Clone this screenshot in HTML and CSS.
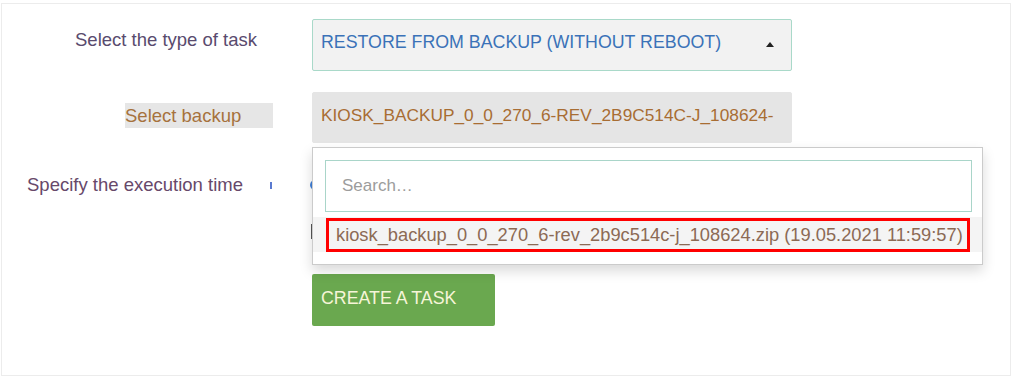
FILE: index.html
```html
<!DOCTYPE html>
<html lang="en">
<head>
    <meta charset="UTF-8">
    <meta name="viewport" content="width=device-width, initial-scale=1.0">
    <title>New task</title>
    <link rel="stylesheet" href="styles.css">
</head>
<body>
    <div class="panel">
        <div class="form">
            <div class="row row-type">
                <div class="row-label">
                    <span class="label label-type">Select the type of task</span>
                </div>
                <div class="row-control">
                    <div class="select select-open">
                        <span class="select-value">RESTORE FROM BACKUP (WITHOUT REBOOT)</span>
                        <span class="select-arrow"></span>
                    </div>
                </div>
            </div>

            <div class="row row-backup">
                <div class="row-label">
                    <span class="label label-backup">Select backup</span>
                </div>
                <div class="row-control">
                    <div class="select select-backup">
                        <span class="select-value">KIOSK_BACKUP_0_0_270_6-REV_2B9C514C-J_108624-</span>
                    </div>
                </div>
            </div>

            <div class="row row-time">
                <div class="row-label">
                    <span class="label label-time">Specify the execution time</span>
                    <span class="tick"></span>
                </div>
                <div class="row-control">
                    <span class="radio"></span>
                </div>
            </div>

            <div class="row row-check">
                <div class="row-label"></div>
                <div class="row-control">
                    <span class="checkbox"></span>
                </div>
            </div>

            <div class="row row-submit">
                <div class="row-label"></div>
                <div class="row-control">
                    <button class="btn-create">CREATE A TASK</button>
                </div>
            </div>
        </div>

        <!-- открытый список бэкапов -->
        <div class="dropdown">
            <input type="text" class="dropdown-search" placeholder="Search…">
            <div class="dropdown-option">
                <div class="option-marked">kiosk_backup_0_0_270_6-rev_2b9c514c-j_108624.zip (19.05.2021 11:59:57)</div>
            </div>
        </div>
    </div>
</body>
</html>
```

FILE: styles.css
```css
* {
    margin: 0;
    padding: 0;
    box-sizing: border-box;
}

body {
    font-family: "Liberation Sans", Arial, sans-serif;
    background: #fff;
    margin: 0;
}

.panel {
    position: relative;
    width: 1010px;
    height: 373px;
    margin: 3px 0 0 1px;
    border: 1px solid #ececec;
    padding-top: 15px;
}

.form {
    display: flex;
    flex-direction: column;
}

.row {
    display: flex;
    align-items: flex-start;
}

.row-label {
    width: 310px;
    display: flex;
    align-items: center;
}

.row-control {
    width: 480px;
}

.label {
    font-size: 18.5px;
    line-height: 21px;
}

.label-type {
    color: #594b6e;
    margin: 10px 0 0 73px;
}

.label-backup {
    display: block;
    width: 148px;
    height: 25px;
    line-height: 25px;
    margin: 11px 0 0 123px;
    background: #e6e6e6;
    color: #a6723d;
}

.label-time {
    color: #67486a;
    margin-left: 25px;
}

.tick {
    width: 2px;
    height: 7px;
    background: #5a7ad0;
    margin-left: auto;
    margin-right: 40px;
    margin-top: 3px;
}

/* селекты */
.select {
    display: flex;
    align-items: flex-start;
    height: 52px;
    padding: 12px 16px 0 8px;
    border: 1px solid #e5e5e5;
    border-radius: 2px;
    font-size: 17.8px;
    line-height: 20px;
    white-space: nowrap;
}

.select-open {
    background: #f2f2f2;
    border-color: #a9d9c9;
    color: #3b72b8;
}

.select-arrow {
    flex-shrink: 0;
    width: 0;
    height: 0;
    margin: 10px 1px 0 auto;
    border-left: 4px solid transparent;
    border-right: 4px solid transparent;
    border-bottom: 5px solid #222;
}

.row-backup {
    margin-top: 21px;
}

.select-backup {
    height: 51px;
    background: #e5e5e5;
    color: #a86d33;
    font-size: 17.3px;
}

.row-time {
    margin-top: 29px;
    height: 24px;
    align-items: center;
}

.radio {
    display: block;
    width: 14px;
    height: 12px;
    margin-left: -2px;
    margin-top: 1px;
    border-radius: 50%;
    background: #3f7fd8;
}

.row-check {
    margin-top: 28px;
}

.checkbox {
    display: block;
    width: 15px;
    height: 15px;
    margin-left: -1px;
    border: 2px solid #555;
}

.row-submit {
    margin-top: 35px;
}

.btn-create {
    width: 183px;
    height: 52px;
    padding: 0 0 5px 9px;
    text-align: left;
    vertical-align: top;
    background: #6aa84f;
    color: #f6f5d8;
    border: none;
    border-radius: 2px;
    font-family: inherit;
    font-size: 17.8px;
    line-height: 20px;
    cursor: pointer;
}

/* выпадающий список */
.dropdown {
    position: absolute;
    left: 310px;
    top: 143px;
    width: 671px;
    height: 118px;
    background: #fff;
    border: 1px solid #cbcbcb;
    box-shadow: 0 6px 12px rgba(0, 0, 0, 0.15);
    padding-top: 12px;
}

.dropdown-search {
    display: block;
    width: 647px;
    height: 52px;
    margin-left: 12px;
    padding: 0 16px;
    border: 1px solid #a9d5c9;
    font-family: inherit;
    font-size: 17px;
    color: #555;
    outline: none;
}

.dropdown-search::placeholder {
    color: #9c9c9c;
}

.dropdown-option {
    margin-top: 5px;
    height: 35px;
    padding: 1px 12px 0 13px;
    background: #f4f4f4;
}

.option-marked {
    display: flex;
    align-items: center;
    height: 34px;
    padding-left: 7px;
    border: 3px solid #ff0000;
    color: #8c6a54;
    font-size: 18.3px;
    white-space: nowrap;
}
```
